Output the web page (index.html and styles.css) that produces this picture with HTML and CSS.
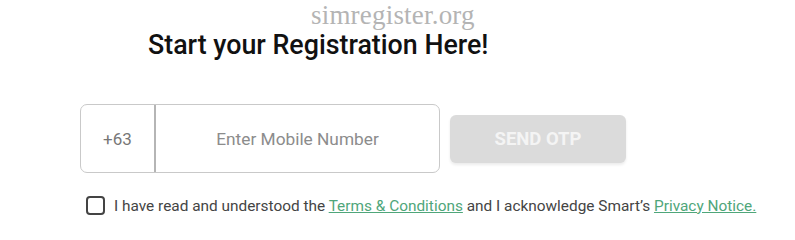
FILE: index.html
```html
<!DOCTYPE html>
<html>
<head>
<meta charset="utf-8">
<link rel="stylesheet" href="styles.css">
</head>
<body>
<div class="page">
  <div class="watermark">simregister.org</div>
  <h1 class="title">Start your Registration Here!</h1>
  <div class="form-row">
    <div class="phone-box">
      <div class="prefix">+63</div>
      <div class="number">Enter Mobile Number</div>
    </div>
    <button class="otp-btn">SEND OTP</button>
  </div>
  <label class="agree">
    <span class="check"></span>
    <span class="agree-text">I have read and understood the <a class="link">Terms &amp; Conditions</a> and I acknowledge Smart’s <a class="link">Privacy Notice.</a></span>
  </label>
</div>
</body>
</html>
```

FILE: styles.css
```css
html, body {
  margin: 0;
  padding: 0;
  background: #ffffff;
}
body {
  font-family: Roboto, "Liberation Sans", sans-serif;
  width: 795px;
  height: 240px;
  overflow: hidden;
}
.page {
  position: relative;
  padding: 0 0 0 80px;
}
.watermark {
  position: absolute;
  left: 311px;
  top: 0;
  font-family: "Liberation Serif", serif;
  font-size: 27px;
  color: #b4b4b4;
  letter-spacing: 0.2px;
}
.title {
  margin: 0;
  padding: 28px 0 0 68px;
  font-size: 26.8px;
  font-weight: 500;
  color: #111111;
  line-height: 34px;
}
.form-row {
  display: flex;
  align-items: center;
  margin-top: 42px;
}
.phone-box {
  display: flex;
  width: 358px;
  height: 67px;
  border: 1px solid #c9c9c9;
  border-radius: 7px;
  box-sizing: content-box;
}
.prefix {
  width: 73px;
  border-right: 2px solid #b5b5b5;
  display: flex;
  align-items: center;
  justify-content: center;
  font-size: 17px;
  color: #777777;
}
.number {
  flex: 1;
  display: flex;
  align-items: center;
  justify-content: center;
  font-size: 17.3px;
  color: #8c8c8c;
}
.otp-btn {
  margin-left: 10px;
  width: 176px;
  height: 48px;
  border: none;
  border-radius: 6px;
  background: #dbdbdb;
  color: #f4f4f4;
  font-family: Roboto, "Liberation Sans", sans-serif;
  font-weight: 700;
  font-size: 18.5px;
  box-shadow: 0 2px 3px rgba(0,0,0,0.08);
}
.agree {
  display: flex;
  align-items: center;
  margin-top: 23px;
  padding-left: 6px;
}
.check {
  width: 15px;
  height: 15px;
  border: 2px solid #444444;
  border-radius: 4px;
  flex: none;
}
.agree-text {
  margin-left: 9px;
  font-size: 15.4px;
  color: #444444;
}
.link {
  color: #4fa67a;
  text-decoration: underline;
}
```
